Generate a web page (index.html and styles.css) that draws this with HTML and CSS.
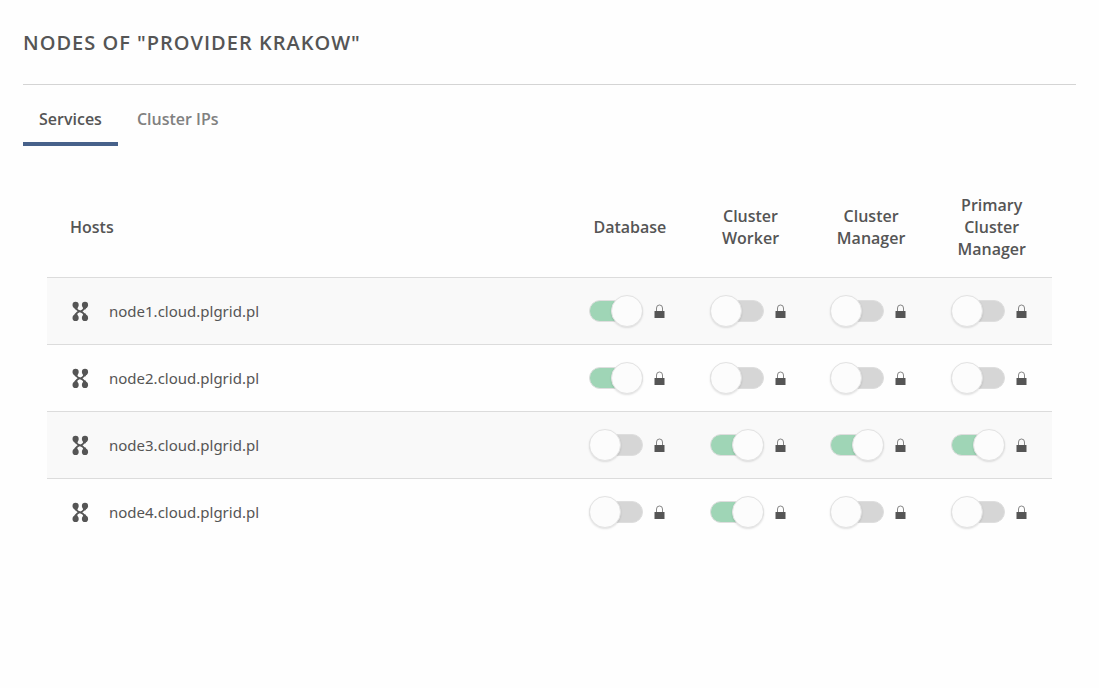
FILE: index.html
```html
<!DOCTYPE html>
<html lang="en">
<head>
    <meta charset="UTF-8">
    <meta name="viewport" content="width=device-width, initial-scale=1.0">
    <title>Nodes</title>
    <link rel="stylesheet" href="styles.css">
</head>
<body>
    <svg class="sprite" aria-hidden="true">
        <symbol id="icon-node" viewBox="0 0 18 20">
            <path d="M5 4C5 9 6.500 9.300 9 10.300S13.500 12 13.500 16M13.500 4C13.500 8 12.500 9.300 9.500 10.300M8.500 10.300C5.500 11.300 5 12.500 5 16" fill="none" stroke="currentColor" stroke-width="1.800"/>
            <circle cx="4.600" cy="3.900" r="3.100" fill="currentColor"/>
            <circle cx="14" cy="3.900" r="3.100" fill="currentColor"/>
            <circle cx="4.600" cy="16.900" r="3.100" fill="currentColor"/>
            <circle cx="14" cy="16.900" r="3.100" fill="currentColor"/>
            <path d="M2.500 6l1.700 2.500h1.600l1-2.500zM16 6l-1.700 2.500h-1.600l-1-2.500zM2.500 14.800l1.700-2.500h1.600l1 2.500zM16 14.800l-1.700-2.500h-1.600l-1 2.500z" fill="currentColor"/>
        </symbol>
        <symbol id="icon-lock" viewBox="0 0 11 14">
            <path d="M2.500 7V4a3 3 0 0 1 6 0v3" fill="none" stroke="currentColor" stroke-width="0.700"/>
            <path d="M0.500 7h10v7h-10z" fill="currentColor"/>
        </symbol>
    </svg>

    <header class="page-header">
        <h1>Nodes of "Provider Krakow"</h1>
    </header>

    <nav class="tabs">
        <a class="tab active" href="#services">Services</a>
        <a class="tab" href="#cluster-ips">Cluster IPs</a>
    </nav>

    <main class="content" id="services">
        <table class="hosts-table">
            <thead>
                <tr>
                    <th class="host-col">Hosts</th>
                    <th>Database</th>
                    <th>Cluster Worker</th>
                    <th>Cluster Manager</th>
                    <th>Primary Cluster Manager</th>
                </tr>
            </thead>
            <tbody id="hostsBody"></tbody>
        </table>
    </main>

    <script>
        const services = ['Database', 'Cluster Worker', 'Cluster Manager', 'Primary Cluster Manager'];
        const hosts = [
            { name: 'node1.cloud.plgrid.pl', enabled: [true, false, false, false] },
            { name: 'node2.cloud.plgrid.pl', enabled: [true, false, false, false] },
            { name: 'node3.cloud.plgrid.pl', enabled: [false, true, true, true] },
            { name: 'node4.cloud.plgrid.pl', enabled: [false, true, false, false] }
        ];

        let html = '';
        hosts.forEach(host => {
            html += `
                <tr>
                    <td class="host-col">
                        <div class="host">
                            <svg class="node-icon"><use href="#icon-node"/></svg>
                            <span class="host-name">${host.name}</span>
                        </div>
                    </td>
                    ${host.enabled.map((on, i) => `
                    <td>
                        <div class="service">
                            <input type="checkbox" class="toggle" aria-label="${services[i]} on ${host.name}" ${on ? 'checked' : ''} disabled>
                            <svg class="lock-icon"><use href="#icon-lock"/></svg>
                        </div>
                    </td>`).join('')}
                </tr>
            `;
        });
        document.getElementById('hostsBody').innerHTML = html;
    </script>
</body>
</html>
```
FILE: styles.css
```css
*,
*::before {
    box-sizing: border-box;
}
body {
    margin: 0;
    padding: 0 23px;
    background: #fefefe;
    color: #555;
    font-family: 'Open Sans', 'Noto Sans', sans-serif;
    font-size: 16px;
    line-height: 22px;
}
.sprite {
    display: none;
}
.page-header {
    padding: 28px 0 26px;
    border-bottom: 1px solid #d4d4d4;
}
h1 {
    margin: 0;
    font-size: 20px;
    font-weight: 600;
    line-height: 30px;
    letter-spacing: 1px;
    text-transform: uppercase;
}
.tabs {
    display: flex;
    gap: 3px;
    padding-top: 8px;
}
.tab {
    padding: 15px 16px 12px;
    border-bottom: 4px solid transparent;
    color: #808080;
    font-weight: 600;
    text-decoration: none;
}
.tab.active {
    color: #555;
    border-bottom-color: #47618a;
}
.content {
    padding: 30px 24px;
}
.hosts-table {
    width: 100%;
    table-layout: fixed;
    border-collapse: separate;
    border-spacing: 0;
}
th {
    width: 12%;
    padding: 18px 16px 17px;
    font-weight: 600;
    text-align: center;
}
th.host-col {
    width: 52%;
    padding-left: 23px;
    text-align: left;
}
td {
    height: 67px;
    padding: 0;
    border-top: 1px solid #dcdcdc;
}
tbody tr:nth-child(odd) {
    background: #f9f9f9;
}
.host {
    display: flex;
    align-items: center;
    gap: 20px;
    padding-left: 24px;
}
.host-name {
    font-family: 'Noto Sans', sans-serif;
    font-size: 15px;
}
.node-icon {
    width: 18px;
    height: 20px;
}
.service {
    display: flex;
    align-items: center;
    justify-content: center;
    gap: 11px;
    padding-right: 6px;
}
.lock-icon {
    width: 11px;
    height: 14px;
}
.toggle {
    appearance: none;
    display: flex;
    align-items: center;
    width: 54px;
    height: 22px;
    margin: 0;
    border: 1px solid #dedede;
    border-radius: 11px;
    background: #d6d6d6;
}
.toggle::before {
    content: '';
    flex: none;
    width: 32px;
    height: 32px;
    margin: 0 -1px;
    border: 1px solid #e3e3e3;
    border-radius: 50%;
    background: #fcfcfc;
    box-shadow: 0 1px 2px rgba(0, 0, 0, 0.12);
}
.toggle:checked {
    justify-content: flex-end;
    background: #9fd5b6;
}
```
